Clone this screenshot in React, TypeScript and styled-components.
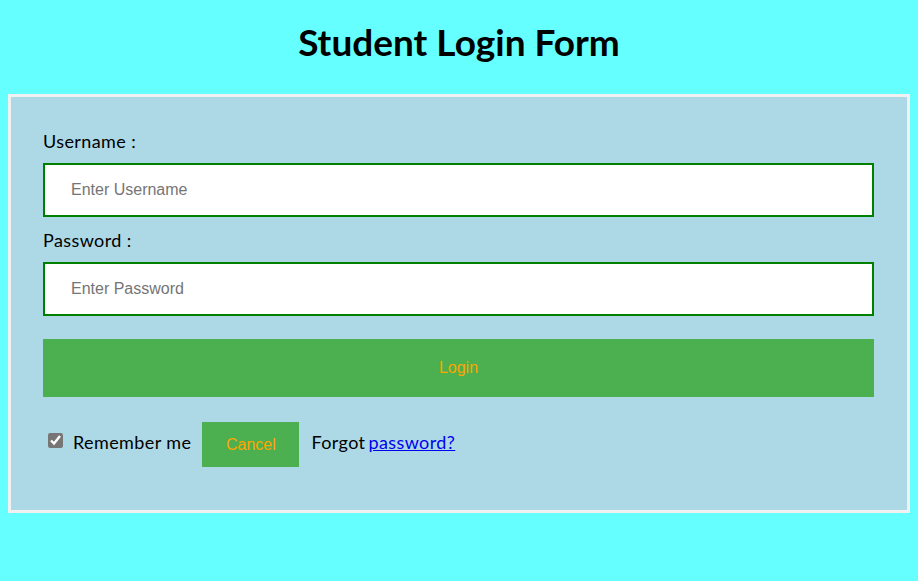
import React from 'react';
import styled, { createGlobalStyle } from 'styled-components';

const GlobalStyle = createGlobalStyle`
  body {
    margin: 8px;
    background-color: #66ffff;
    font-family: Lato, "Open Sans", sans-serif;
  }
`;

const Title = styled.h1`
  margin: 14px 0 32px;
  text-align: center;
  font-size: 37px;
  line-height: 40px;
  font-weight: bold;
  color: #000;
`;

const Container = styled.form`
  display: flex;
  flex-direction: column;
  border: 3px solid #f1f1f1;
  background-color: lightblue;
  padding: 33px 33px 43px 32px;
`;

const Label = styled.label`
  display: block;
  font-size: 18px;
  line-height: 22px;
  letter-spacing: 0.4px;
  color: #000;
`;

const Input = styled.input`
  box-sizing: border-box;
  width: 100%;
  height: 54px;
  margin: 11px 0 12px;
  padding: 0 26px;
  border: 2px solid green;
  background: #fff;
  font-family: "Liberation Sans", Arial, sans-serif;
  font-size: 16px;
  outline: none;

  &::placeholder {
    color: #757575;
  }

  &:last-of-type {
    margin-bottom: 0;
  }
`;

const Button = styled.button<{ $wide?: boolean }>`
  box-sizing: border-box;
  border: none;
  background-color: #4caf50;
  color: orange;
  font-family: "Liberation Sans", Arial, sans-serif;
  font-size: 16px;
  cursor: pointer;
  width: ${(p) => (p.$wide ? '100%' : '97px')};
  height: ${(p) => (p.$wide ? '58px' : '45px')};
  margin: ${(p) => (p.$wide ? '23px 0 0' : '0 12px 0 11px')};
`;

const Row = styled.div`
  display: flex;
  align-items: center;
  margin-top: 25px;
  font-size: 18px;
  line-height: 22px;
  letter-spacing: 0.4px;
`;

const Text = styled.span`
  margin-bottom: 5px;
`;

const Check = styled.input`
  width: 15px;
  height: 15px;
  margin: 0 10px 8px 5px;
  accent-color: #767676;
`;

const Link = styled.a`
  color: #0000ee;
  text-decoration: underline;
  margin-left: 3px;
`;

export default function App() {
  return (
    <>
      <GlobalStyle />
      <Title>Student Login Form</Title>
      <Container onSubmit={(e) => e.preventDefault()}>
        <Label>Username :</Label>
        <Input type="text" placeholder="Enter Username" />
        <Label>Password :</Label>
        <Input type="password" placeholder="Enter Password" />
        <Button type="submit" $wide>
          Login
        </Button>
        <Row>
          <Check type="checkbox" defaultChecked />
          <Text>Remember me</Text>
          <Button type="button">Cancel</Button>
          <Text>
            Forgot<Link href="#">password?</Link>
          </Text>
        </Row>
      </Container>
    </>
  );
}
